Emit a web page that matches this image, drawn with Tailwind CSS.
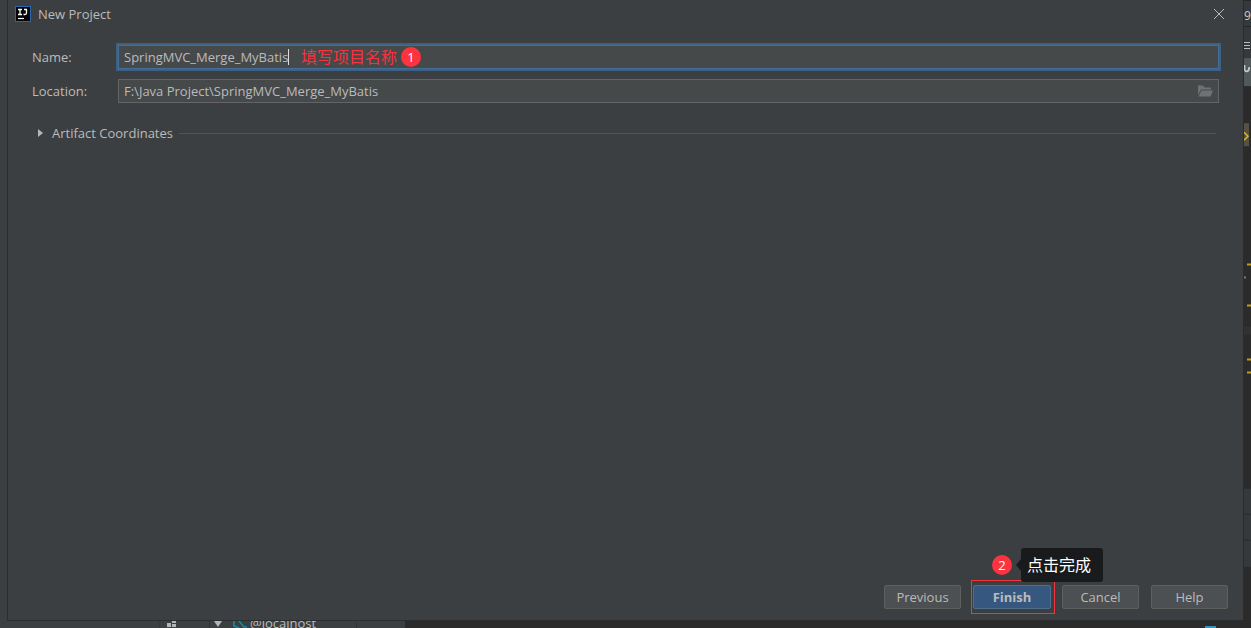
<!DOCTYPE html>
<html lang="en">
<head>
    <meta charset="UTF-8">
    <title>New Project</title>
    <script src="https://cdn.jsdelivr.net/npm/@tailwindcss/browser@4"></script>
</head>
<body class="flex h-screen flex-col overflow-hidden bg-[#3c3f41] font-['Open_Sans','Noto_Sans_CJK_SC',sans-serif] text-[13px] leading-5 text-[#bbbbbb]">
    <div class="flex min-h-0 flex-1">
        <!-- dialog -->
        <main class="ml-[7px] flex flex-1 flex-col border-b border-l border-[#2b2d2e] bg-[#3c3f41]">
            <header class="flex h-[27px] items-center gap-[7px] pl-[7px] pr-[18px]">
                <svg class="size-4" viewBox="0 0 16 16">
                    <rect width="16" height="16" fill="#2966b0"/>
                    <rect x="1" y="1" width="14" height="14" fill="#050505"/>
                    <path d="M3 3.500h4M5 3.500v5M3 8.500h4M9 3.500h3M11.500 3v4q0 1.500-1.500 1.500H8.500" fill="none" stroke="#fff" stroke-width="1.300"/>
                    <path d="M3 12.500h6" stroke="#fff" stroke-width="1.200"/>
                </svg>
                <h1>New Project</h1>
                <button aria-label="Close" class="ml-auto">
                    <svg class="size-3" viewBox="0 0 12 12"><path d="M1 1l10 10M11 1L1 11" stroke="#b8b8b8"/></svg>
                </button>
            </header>

            <form class="flex flex-1 flex-col pt-[18px]">
                <div class="grid grid-cols-[86px_1fr] items-center gap-y-[10px] px-6">
                    <label for="name">Name:</label>
                    <div class="relative">
                        <input id="name" type="text" value="SpringMVC_Merge_MyBatis" class="block h-6 w-full border border-[#466d94] bg-[#45494a] px-[5px] outline-none ring-2 ring-[#3d6185]">
                        <!-- caret and step 1 note -->
                        <div class="pointer-events-none absolute inset-y-0 left-[170px] flex items-center">
                            <span class="h-4 w-px bg-[#dddddd]"></span>
                            <span class="ml-3 text-base text-[#f5333f]">填写项目名称</span>
                            <span class="ml-1 flex size-5 items-center justify-center rounded-full bg-[#fd3340] text-white">1</span>
                        </div>
                    </div>
                    <label for="location">Location:</label>
                    <div class="relative">
                        <input id="location" type="text" value="F:\Java Project\SpringMVC_Merge_MyBatis" class="block h-6 w-full border border-[#646464] bg-[#45494a] pl-[5px] pr-7 outline-none">
                        <button type="button" aria-label="Browse" class="absolute inset-y-0 right-[6px]">
                            <svg class="size-4" viewBox="0 0 16 16" fill="#6e7274"><path d="M1 2.500h5l1.500 2H14v2H4L1 12z"/><path d="M4.500 7.500H16l-2.500 6H1.500z"/></svg>
                        </button>
                    </div>
                </div>

                <button type="button" class="mt-5 flex items-center pl-[29px] pr-[27px]">
                    <svg class="h-2 w-[15px]" viewBox="0 0 15 8"><path d="M1 0l5 4-5 4z" fill="#b4b6b7"/></svg>
                    <span>Artifact Coordinates</span>
                    <span class="ml-[6px] h-px flex-1 bg-[#515456]"></span>
                </button>

                <div class="mt-auto flex items-center justify-end pb-[6px] pr-[15px]">
                    <button type="button" class="h-6 w-[77px] rounded-[2px] border border-[#5e6060] bg-[#4c5052] leading-none">Previous</button>
                    <div class="relative ml-[10px] mr-[7px] border border-[#f5333f] py-1 pl-px pr-[3px]">
                        <button type="submit" class="block h-6 w-[78px] rounded-[2px] border border-[#4c708c] bg-[#365880] font-bold leading-none">Finish</button>
                        <!-- step 2 note -->
                        <div class="pointer-events-none absolute bottom-full left-5 -mb-px flex items-center whitespace-nowrap">
                            <span class="flex size-5 items-center justify-center rounded-full bg-[#fd3340] text-white">2</span>
                            <svg class="ml-1 h-3 w-[5px]" viewBox="0 0 5 12"><path d="M5 0v12L0 6z" fill="#181a1b"/></svg>
                            <span class="rounded-[3px] bg-[#181a1b] py-[5px] pl-[6px] pr-3 text-base text-white">点击完成</span>
                        </div>
                    </div>
                    <button type="button" class="h-6 w-[77px] rounded-[2px] border border-[#5e6060] bg-[#4c5052] leading-none">Cancel</button>
                    <button type="button" class="ml-3 h-6 w-[77px] rounded-[2px] border border-[#5e6060] bg-[#4c5052] leading-none">Help</button>
                </div>
            </form>
        </main>

        <!-- editor edge behind the dialog -->
        <aside class="flex w-2 flex-col overflow-hidden bg-[#2b2b2b]">
            <svg class="w-2 flex-1" viewBox="0 0 8 620" preserveAspectRatio="xMinYMin slice">
                <rect width="8" height="58" fill="#36393b"/>
                <path d="M0 .5h8M0 26.500h8" stroke="#252728"/>
                <text x="1" y="20" font-size="12" fill="#c9c9c9">9</text>
                <path d="M1 42.500h6M1 45.500h6M1 48.500h6" stroke="#bcbcbc"/>
                <rect y="58" width="8" height="28" fill="#52595a"/>
                <path d="M1.500 65v4q.5 3 3 2 2-1 1.500-4" fill="none" stroke="#c5cbc5" stroke-width="1.800"/>
                <rect y="123" width="6" height="23" fill="#565143"/>
                <path d="M1 132l4 4-4 4" fill="none" stroke="#dfb72a" stroke-width="1.500"/>
                <path d="M4 264h4M4 305h4M4 359h4M4 372h4" stroke="#c39a16" stroke-width="2"/>
                <rect x="1" y="276" width="2" height="2" fill="#77806c"/>
                <rect y="326" width="8" height="8" fill="#323232"/>
                <rect y="488" width="8" height="78" fill="#36393b"/>
                <path d="M0 513.500h8M0 539.500h8" stroke="#292b2c"/>
                <path d="M.5 0v620" stroke="#292c2c"/>
            </svg>
        </aside>
    </div>

    <!-- services panel under the dialog -->
    <footer class="flex h-[7px] overflow-hidden bg-[#2b2b2b]">
        <div class="flex h-[7px] w-[405px] items-start bg-[#3c3f41] pl-[159px]">
            <svg class="h-[7px] w-[91px]" viewBox="0 0 91 7">
                <path d="M0 0v7M50.500 0v7" stroke="#313435"/>
                <path d="M8 2h4v4H8zM13 3h4v3h-4zM13 0h4v2h-4z" fill="#b4b4b4"/>
                <path d="M55 0h8l-4 6z" fill="#b4b4b4"/>
                <path d="M75 0v5l5 2M80 0l5 6h3" fill="none" stroke="#168bab" stroke-width="1.500"/>
            </svg>
            <span class="-mt-2">@localhost</span>
            <span class="ml-10 h-[7px] w-px bg-[#313435]"></span>
        </div>
        <span class="ml-auto mr-[35px] mt-[5px] h-1 w-[11px] bg-[#3592c4]"></span>
    </footer>
</body>
</html>
